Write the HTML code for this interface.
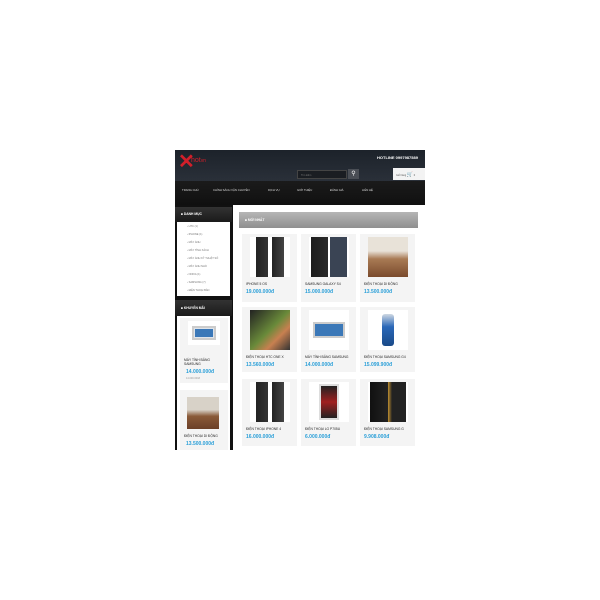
<!DOCTYPE html><html><head><meta charset="utf-8"><style>
*{margin:0;padding:0;box-sizing:border-box}
body{width:600px;height:600px;background:#fff;position:relative;font-family:"Liberation Sans",sans-serif;overflow:hidden}
.a{position:absolute}
.t{font-size:3px;color:#333;white-space:nowrap}
.card{position:absolute;width:55px;background:#f4f4f4}
.card .img{position:absolute;left:8px;top:3px;width:40px;height:40px}
.card .n{position:absolute;left:4px;top:48px;font-size:3.3px;color:#222;white-space:nowrap}
.card .p{position:absolute;left:4px;top:55px;font-size:5px;color:#2a9fd8;font-weight:bold}
.li{position:absolute;left:10px;font-size:2.6px;color:#777}
</style></head><body>
<div class="a" style="left:175px;top:150px;width:250px;height:31px;background:linear-gradient(#1c222a,#2a3039)"></div>
<div class="a" style="left:178px;top:152px;font-size:20px;color:#d21f2a;font-weight:bold;line-height:20px">✕</div>
<div class="a" style="left:191px;top:157px;font-size:7px;color:#d21f2a">hot<span style="font-size:5px">vn</span></div>
<div class="a" style="left:377px;top:155px;font-size:4px;color:#fff;font-weight:bold">HOTLINE 0997987589</div>
<div class="a" style="left:297px;top:170px;width:50px;height:9px;background:#1a1d22;border:1px solid #444"><span style="font-size:2.5px;color:#777;position:absolute;left:3px;top:3px">Tìm kiếm</span></div>
<div class="a" style="left:348px;top:169px;width:11px;height:10px;background:#4a4e55;color:#fff;font-size:6px;text-align:center;line-height:10px">⚲</div>
<div class="a" style="left:393px;top:168px;width:32px;height:12px;background:#f3f3f3"><span style="font-size:2.5px;color:#555;position:absolute;left:3px;top:4px">Giỏ hàng <b style="color:#d21f2a;font-size:5px">🛒</b> 0</span></div>
<div class="a" style="left:175px;top:181px;width:250px;height:24px;background:linear-gradient(#1b1b1b,#101010)"></div>
<div class="a" style="top:188px;left:182px;font-size:2.8px;color:#ddd;word-spacing:0">TRANG CHỦ</div>
<div class="a" style="top:188px;left:213px;font-size:2.8px;color:#ddd">CHÍNH SÁCH VẬN CHUYỂN</div>
<div class="a" style="top:188px;left:268px;font-size:2.8px;color:#ddd">DỊCH VỤ</div>
<div class="a" style="top:188px;left:297px;font-size:2.8px;color:#ddd">GIỚI THIỆU</div>
<div class="a" style="top:188px;left:330px;font-size:2.8px;color:#ddd">ĐÁNH GIÁ</div>
<div class="a" style="top:188px;left:362px;font-size:2.8px;color:#ddd">LIÊN HỆ</div>
<div class="a" style="left:175px;top:205px;width:58px;height:245px;background:#111"></div>
<div class="a" style="left:175px;top:207px;width:57px;height:15px;background:linear-gradient(#333,#1a1a1a)"><span style="position:absolute;left:6px;top:5px;font-size:3.3px;color:#fff;font-weight:bold">■ DANH MỤC</span></div>
<div class="a" style="left:177px;top:222px;width:53px;height:74px;background:#fff">
<div class="li" style="top:3px">› HTC (1)</div><div class="li" style="top:11px">› IPHONE (1)</div><div class="li" style="top:19px">› MÁY ẢNH</div><div class="li" style="top:27px">› MÁY TÍNH XÁCH</div><div class="li" style="top:35px">› MÁY ẢNH KỸ THUẬT SỐ</div><div class="li" style="top:43px">› MÁY ẢNH NHỎ</div><div class="li" style="top:51px">› NOKIA (1)</div><div class="li" style="top:59px">› SAMSUNG (7)</div><div class="li" style="top:67px">› ĐIỆN THOẠI BÀN</div></div>
<div class="a" style="left:175px;top:300px;width:57px;height:16px;background:linear-gradient(#333,#1a1a1a)"><span style="position:absolute;left:6px;top:6px;font-size:3.3px;color:#fff;font-weight:bold">■ KHUYẾN MÃI</span></div>
<div class="a" style="left:177px;top:316px;width:53px;height:134px;background:#fff"></div>
<div class="a" style="left:180px;top:318px;width:48px;height:65px;background:#f4f4f4"></div>
<div class="a" style="left:188px;top:321px;width:32px;height:24px;background:#fff"><div style="margin:5px 4px;width:24px;height:14px;background:#dfe4ea;border:2px solid #ccc"><div style="margin:1px;height:8px;background:#3b78b8"></div></div></div>
<div class="a" style="left:184px;top:358px;font-size:3.3px;color:#222;line-height:4px">MÁY TÍNH BẢNG<br>SAMSUNG</div>
<div class="a" style="left:186px;top:369px;font-size:5px;color:#2a9fd8;font-weight:bold">14.000.000đ</div>
<div class="a" style="left:186px;top:377px;font-size:2.5px;color:#999">14.000.000đ</div>
<div class="a" style="left:180px;top:390px;width:48px;height:60px;background:#f4f4f4"></div>
<div class="a" style="left:187px;top:397px;width:32px;height:32px;background:linear-gradient(#d8d2c8 40%,#8a5a38 60%,#6b4028)"></div>
<div class="a" style="left:184px;top:434px;font-size:3.3px;color:#222">ĐIỆN THOẠI DI ĐỘNG</div>
<div class="a" style="left:186px;top:441px;font-size:5px;color:#2a9fd8;font-weight:bold">13.500.000đ</div>
<div class="a" style="left:239px;top:212px;width:179px;height:16px;background:linear-gradient(#b5b5b5,#8f8f8f)"><span style="position:absolute;left:6px;top:6px;font-size:3.3px;color:#fff;font-weight:bold">■ MỚI NHẤT</span></div>

<div class="card" style="left:242px;top:234px;height:68px"><div class="img" style="background:linear-gradient(90deg,#fff 15%,#222 15%,#333 45%,#fff 45%,#fff 55%,#222 55%,#444 85%,#fff 85%)"></div><div class="n">IPHONE 5 OS</div><div class="p">19.000.000đ</div></div>
<div class="card" style="left:301px;top:234px;height:68px"><div class="img" style="background:linear-gradient(90deg,#fff 5%,#1c1c1c 5%,#2a2a2a 48%,#fff 48%,#fff 52%,#3a4454 52%,#3a4454 95%,#fff 95%)"></div><div class="n">SAMSUNG GALAXY S4</div><div class="p">15.000.000đ</div></div>
<div class="card" style="left:360px;top:234px;height:68px"><div class="img" style="background:linear-gradient(#e8e2d8 35%,#a87a54 55%,#7a4a2c)"></div><div class="n">ĐIỆN THOẠI DI ĐỘNG</div><div class="p">13.500.000đ</div></div>

<div class="card" style="left:242px;top:307px;height:65px"><div class="img" style="background:linear-gradient(135deg,#222,#6a8a3a 50%,#c88050 70%,#333)"></div><div class="n">ĐIỆN THOẠI HTC ONE X</div><div class="p">13.560.000đ</div></div>
<div class="card" style="left:301px;top:307px;height:65px"><div class="img" style="background:#fff"><div style="margin:12px 4px;height:16px;border:2px solid #ccc;background:#3b78b8"></div></div><div class="n">MÁY TÍNH BẢNG SAMSUNG</div><div class="p">14.000.000đ</div></div>
<div class="card" style="left:360px;top:307px;height:65px"><div class="img" style="background:#fff"><div style="margin:4px 14px;height:32px;border-radius:3px;background:linear-gradient(#cfd8e2,#2a68b8 40%,#1a4a88)"></div></div><div class="n">ĐIỆN THOẠI SAMSUNG G4</div><div class="p">15.099.900đ</div></div>

<div class="card" style="left:242px;top:379px;height:67px"><div class="img" style="background:linear-gradient(90deg,#fff 15%,#222 15%,#333 45%,#fff 45%,#fff 55%,#222 55%,#444 85%,#fff 85%)"></div><div class="n">ĐIỆN THOẠI IPHONE 4</div><div class="p">16.000.000đ</div></div>
<div class="card" style="left:301px;top:379px;height:67px"><div class="img" style="background:#fff"><div style="margin:2px 10px;height:36px;border:2px solid #ddd;background:linear-gradient(#222,#a02020 50%,#222)"></div></div><div class="n">ĐIỆN THOẠI LG P705U</div><div class="p">6.000.000đ</div></div>
<div class="card" style="left:360px;top:379px;height:67px"><div class="img" style="background:linear-gradient(90deg,#fff 5%,#111 5%,#222 50%,#c09030 50%,#222 60%,#222 95%,#fff 95%)"></div><div class="n">ĐIỆN THOẠI SAMSUNG G</div><div class="p">9.908.000đ</div></div>
</body></html>
